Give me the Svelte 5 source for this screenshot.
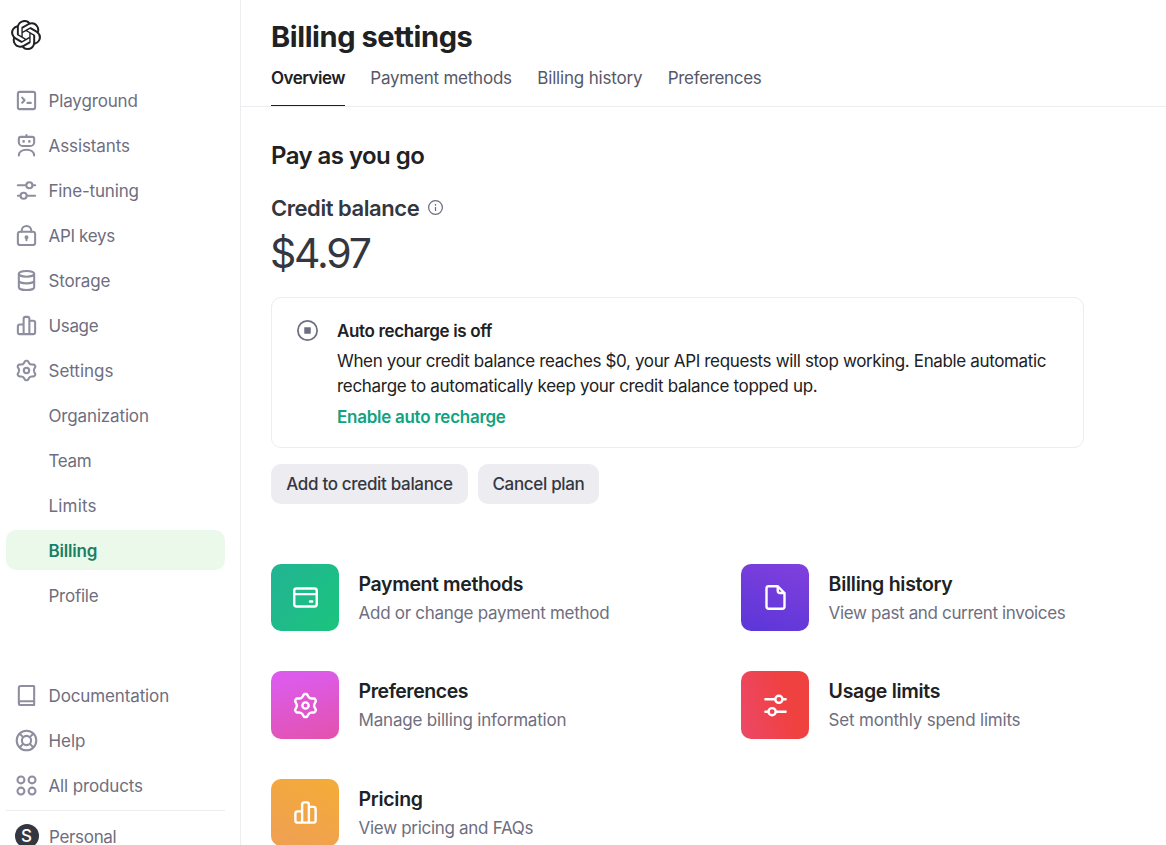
<script>
  const mainNav = [
    { label: 'Playground', icon: 'terminal', ls: -0.15 },
    { label: 'Assistants', icon: 'robot', ls: -0.1 },
    { label: 'Fine-tuning', icon: 'sliders', ls: -0.17 },
    { label: 'API keys', icon: 'lock', ls: -0.33 },
    { label: 'Storage', icon: 'database', ls: -0.15 },
    { label: 'Usage', icon: 'bars', ls: -0.35 },
    { label: 'Settings', icon: 'gear', ls: -0.03 },
    { label: 'Organization', ls: -0.15 },
    { label: 'Team', ls: -0.3 },
    { label: 'Limits', ls: 0.18 },
    { label: 'Billing', active: true, ls: -0.2 },
    { label: 'Profile', ls: -0.25 }
  ];
  const footNav = [
    { label: 'Documentation', icon: 'book', ls: -0.12 },
    { label: 'Help', icon: 'help', ls: -0.05 },
    { label: 'All products', icon: 'grid', ls: -0.13 }
  ];
  const tabs = [
    { label: 'Overview', active: true, ls: -0.55 },
    { label: 'Payment methods', ls: -0.22 },
    { label: 'Billing history', ls: -0.18 },
    { label: 'Preferences', ls: -0.33 }
  ];
  const cards = [
    { title: 'Payment methods', text: 'Add or change payment method', icon: 'card', tone: 'green', ls: -0.38, ts: -0.29 },
    { title: 'Billing history', text: 'View past and current invoices', icon: 'file', tone: 'purple', ls: -0.28, ts: -0.35 },
    { title: 'Preferences', text: 'Manage billing information', icon: 'gear', tone: 'pink', ls: -0.46, ts: -0.2 },
    { title: 'Usage limits', text: 'Set monthly spend limits', icon: 'sliders', tone: 'red', ls: -0.3, ts: -0.2 },
    { title: 'Pricing', text: 'View pricing and FAQs', icon: 'bars', tone: 'orange', ls: -0.3, ts: -0.3 }
  ];
</script>

{#snippet glyph(name)}
  <svg class="icon" viewBox="0 0 24 24" fill="none" stroke="currentColor" stroke-width="2.150" stroke-linecap="round" stroke-linejoin="round">
    {#if name === 'terminal'}
      <rect x="3" y="3" width="18" height="18" rx="2" /><path d="M7.500 9l2.500 2.700-2.500 2.700M13 14.500h3.500" />
    {:else if name === 'robot'}
      <path d="M12 1v2M6 3h12a2 2 0 0 1 2 2v3.500a4 4 0 0 1-4 4H8a4 4 0 0 1-4-4V5a2 2 0 0 1 2-2zM4 22.500c0-3.500 3.200-6 8-6s8 2.500 8 6" /><path d="M9 7.700v.1M15 7.700v.1" stroke-width="2.800" />
    {:else if name === 'sliders'}
      <circle cx="15" cy="6.500" r="3.200" /><circle cx="9" cy="17.500" r="3.200" /><path d="M3 6.500h8.500M18.500 6.500H21M3 17.500h2.500M12.500 17.500H21" />
    {:else if name === 'lock'}
      <rect x="3" y="8" width="18" height="14" rx="2.500" /><path d="M7 8V7a5 5 0 0 1 10 0v1M12 14.500v2.500" /><circle cx="12" cy="13.700" r="1" fill="currentColor" />
    {:else if name === 'database'}
      <ellipse cx="12" cy="5" rx="8" ry="3" /><path d="M4 5v14c0 1.700 3.600 3 8 3s8-1.300 8-3V5M4 12c0 1.700 3.600 3 8 3s8-1.300 8-3" />
    {:else if name === 'bars'}
      <path d="M9 21V5a2 2 0 0 1 2-2h2a2 2 0 0 1 2 2v16M9 11H5a2 2 0 0 0-2 2v6a2 2 0 0 0 2 2h14a2 2 0 0 0 2-2V9a2 2 0 0 0-2-2h-4" />
    {:else if name === 'gear'}
      <circle cx="12" cy="12" r="2.800" />
      <path transform="translate(-2.400 -2.400) scale(1.200)" stroke-width="1.800" d="M11.568 3.500a1 1 0 0 0-.863.494l-.811 1.381A3 3 0 0 1 7.330 6.856l-1.596.013a1 1 0 0 0-.858.501l-.439.761a1 1 0 0 0-.005.992l.788 1.392a3 3 0 0 1 0 2.966l-.788 1.392a1 1 0 0 0 .005.992l.439.760a1 1 0 0 0 .858.502l1.596.013a3 3 0 0 1 2.563 1.480l.811 1.381a1 1 0 0 0 .863.494h.864a1 1 0 0 0 .863-.494l.811-1.381a3 3 0 0 1 2.563-1.480l1.596-.013a1 1 0 0 0 .858-.502l.439-.760a1 1 0 0 0 .005-.992l-.788-1.392a3 3 0 0 1 0-2.966l.788-1.392a1 1 0 0 0-.005-.992l-.439-.761a1 1 0 0 0-.858-.501l-1.596-.013a3 3 0 0 1-2.563-1.481l-.811-1.381a1 1 0 0 0-.863-.494z" />
    {:else if name === 'book'}
      <path d="M20 18V2.500a.5.5 0 0 0-.5-.5H6a2 2 0 0 0-2 2v16M20 18H6a2 2 0 0 0 0 4h14zM20 18v4" />
    {:else if name === 'help'}
      <circle cx="12" cy="12" r="10.200" /><circle cx="12" cy="12" r="4.800" /><path d="M5 5l3.500 3.500M19 5l-3.500 3.500M5 19l3.500-3.500M19 19l-3.500-3.500" />
    {:else if name === 'grid'}
      <circle cx="6.200" cy="6.200" r="3.600" /><circle cx="17.800" cy="6.200" r="3.600" /><circle cx="6.200" cy="17.800" r="3.600" /><circle cx="17.800" cy="17.800" r="3.600" />
    {:else if name === 'card'}
      <rect x="2" y="4" width="20" height="16" rx="2" /><path d="M2 9h20M16 15.500h2" />
    {:else if name === 'file'}
      <path d="M14 2H6a2 2 0 0 0-2 2v16a2 2 0 0 0 2 2h12a2 2 0 0 0 2-2V8zM14 2v4a2 2 0 0 0 2 2h4" />
    {/if}
  </svg>
{/snippet}

{#snippet navItem(item)}
  <a class="nav-item" class:active={item.active}>
    <span class="nav-icon">{#if item.icon}{@render glyph(item.icon)}{/if}</span>
    <span class="nav-label" style="letter-spacing: {item.ls}px">{item.label}</span>
  </a>
{/snippet}

<div class="app">
  <aside>
    <svg class="logo" viewBox="0 0 24 24" fill="currentColor"><path d="M22.2819 9.8211a5.9847 5.9847 0 0 0-.5157-4.9108 6.0462 6.0462 0 0 0-6.5098-2.9A6.0651 6.0651 0 0 0 4.9807 4.1818a5.9847 5.9847 0 0 0-3.9977 2.9 6.0462 6.0462 0 0 0 .7427 7.0966 5.98 5.98 0 0 0 .511 4.9107 6.051 6.051 0 0 0 6.5146 2.9001A5.9847 5.9847 0 0 0 13.2599 24a6.0557 6.0557 0 0 0 5.7718-4.2058 5.9894 5.9894 0 0 0 3.9977-2.9001 6.0557 6.0557 0 0 0-.7475-7.0729zm-9.022 12.6081a4.4755 4.4755 0 0 1-2.8764-1.0408l.1419-.0804 4.7783-2.7582a.7948.7948 0 0 0 .3927-.6813v-6.7369l2.02 1.1686a.071.071 0 0 1 .038.052v5.5826a4.504 4.504 0 0 1-4.4945 4.4944zm-9.6607-4.1254a4.4708 4.4708 0 0 1-.5346-3.0137l.142.0852 4.783 2.7582a.7712.7712 0 0 0 .7806 0l5.8428-3.3685v2.3324a.0804.0804 0 0 1-.0332.0615L9.74 19.9502a4.4992 4.4992 0 0 1-6.1408-1.6464zM2.3408 7.8956a4.485 4.485 0 0 1 2.3655-1.9728V11.6a.7664.7664 0 0 0 .3879.6765l5.8144 3.3543-2.0201 1.1685a.0757.0757 0 0 1-.071 0l-4.8303-2.7865A4.504 4.504 0 0 1 2.3408 7.872zm16.5963 3.8558L13.1038 8.364 15.1192 7.2a.0757.0757 0 0 1 .071 0l4.8303 2.7913a4.4944 4.4944 0 0 1-.6765 8.1042v-5.6772a.79.79 0 0 0-.407-.667zm2.0107-3.0231l-.142-.0852-4.7735-2.7818a.7759.7759 0 0 0-.7854 0L9.409 9.2297V6.8974a.0662.0662 0 0 1 .0284-.0615l4.8303-2.7866a4.4992 4.4992 0 0 1 6.6802 4.66zM8.3065 12.863l-2.02-1.1638a.0804.0804 0 0 1-.038-.0567V6.0742a4.4992 4.4992 0 0 1 7.3757-3.4537l-.142.0805L8.704 5.459a.7948.7948 0 0 0-.3927.6813zm1.0976-2.3654l2.602-1.4998 2.6069 1.4998v2.9994l-2.5974 1.4997-2.6067-1.4997Z" /></svg>
    <nav>
      {#each mainNav as item}{@render navItem(item)}{/each}
    </nav>
    <nav class="foot">
      {#each footNav as item}{@render navItem(item)}{/each}
    </nav>
    <div class="account"><span class="avatar">S</span><span class="account-name">Personal</span></div>
  </aside>

  <main>
    <header>
      <h1>Billing settings</h1>
      <div class="tabs">
        {#each tabs as tab}
          <a class:active={tab.active} style="letter-spacing: {tab.ls}px">{tab.label}</a>
        {/each}
      </div>
    </header>

    <section>
      <h2>Pay as you go</h2>
      <h3>
        <span>Credit balance</span>
        <svg class="info" viewBox="0 0 24 24" fill="none" stroke="currentColor" stroke-width="2"><circle cx="12" cy="12" r="11" /><path d="M12 11v6.500M12 6.500v2.500" /></svg>
      </h3>
      <div class="amount">$4.97</div>

      <div class="notice">
        <svg class="stop" viewBox="0 0 24 24"><circle cx="12" cy="12" r="11" fill="none" stroke="currentColor" stroke-width="2" /><rect x="8.300" y="8.300" width="7.400" height="7.400" fill="currentColor" /></svg>
        <div>
          <div class="notice-title">Auto recharge is off</div>
          <p><span class="line-a">When your credit balance reaches $0, your API requests will stop working. Enable automatic</span><br /><span class="line-b">recharge to automatically keep your credit balance topped up.</span></p>
          <a class="enable">Enable auto recharge</a>
        </div>
      </div>

      <div class="actions">
        <button class="add">Add to credit balance</button>
        <button class="cancel">Cancel plan</button>
      </div>

      <div class="cards">
        {#each cards as card}
          <a class="card">
            <span class="tile {card.tone}">{@render glyph(card.icon)}</span>
            <span class="card-body">
              <span class="card-title" style="letter-spacing: {card.ls}px">{card.title}</span>
              <span class="card-text" style="letter-spacing: {card.ts}px">{card.text}</span>
            </span>
          </a>
        {/each}
      </div>
    </section>
  </main>
</div>

<style>
  :global(body) { margin: 0; background: #fff; overflow: hidden; }
  * { box-sizing: border-box; }
  .app { display: flex; width: 100%; height: 845px; overflow: hidden; font-family: Inter, 'Liberation Sans', sans-serif; font-size: 17px; color: #202123; white-space: nowrap; }
  aside { flex: none; width: 241px; padding: 20px 15px 0 6px; border-right: 1px solid #ececf1; color: #6e6e80; display: flex; flex-direction: column; }
  .logo { flex: none; display: block; width: 30px; height: 30px; margin: 0 0 30px 5px; color: #202123; }
  nav { display: flex; flex-direction: column; gap: 5px; }
  .nav-item { display: flex; align-items: center; height: 40px; padding: 1px 0 0 9px; border-radius: 10px; }
  .nav-item.active { background: #ebf9eb; color: #1a7f64; font-weight: 600; }
  .nav-icon { width: 33.500px; display: flex; color: #8e8ea0; }
  .nav-label { padding-top: 1px; }
  .icon { display: block; width: 23px; height: 23px; overflow: visible; }
  .foot { flex: none; height: 136px; margin-top: 60px; border-bottom: 1px solid #ececf1; }
  .account { flex: none; display: flex; align-items: center; gap: 10.500px; height: 40px; margin-top: 5px; padding-left: 8.500px; }
  .avatar { width: 24px; height: 24px; border-radius: 50%; background: #353740; color: #fff; display: flex; align-items: center; justify-content: center; font-size: 17px; font-weight: 500; }
  .account-name { padding-top: 1px; letter-spacing: -0.320px; }
  main { flex: 1; min-width: 0; }
  header { height: 107px; padding: 18px 30px 0; border-bottom: 1px solid #ececf1; }
  h1, h2, h3, p { margin: 0; }
  h1 { font-size: 29px; line-height: 38px; font-weight: 700; letter-spacing: -0.420px; }
  .tabs { display: flex; gap: 25.400px; height: 50px; }
  .tabs a { height: 50px; line-height: 45px; color: #565869; }
  .tabs a.active { color: #202123; font-weight: 600; border-bottom: 1px solid #202123; }
  section { width: 843px; padding: 33px 0 0 30px; }
  h2 { font-size: 24px; line-height: 32px; font-weight: 600; letter-spacing: -0.560px; }
  h3 { display: flex; align-items: center; gap: 9px; margin-top: 21px; font-size: 22px; line-height: 30px; font-weight: 600; letter-spacing: -0.450px; color: #353740; }
  .info { width: 15px; height: 15px; color: #6e6e80; margin-top: -2px; }
  .amount { height: 60px; line-height: 60px; font-size: 41px; margin-left: -1px; letter-spacing: -2.200px; color: #353740; }
  .notice { display: flex; gap: 19px; width: 813px; height: 151px; margin-top: 14px; padding: 21px 25px; border: 1px solid #ececf1; border-radius: 10px; }
  .stop { flex: none; width: 21px; height: 21px; margin-top: 1px; color: #6e6e80; }
  .notice-title { line-height: 24px; font-weight: 600; letter-spacing: -0.350px; }
  p { margin-top: 6px; line-height: 25px; }
  .line-a { letter-spacing: -0.355px; }
  .line-b { letter-spacing: -0.300px; }
  .enable { display: block; margin-top: 6px; line-height: 25px; color: #10a37f; font-weight: 600; letter-spacing: -0.270px; }
  .actions { display: flex; gap: 10px; margin-top: 16px; }
  button { height: 40px; padding: 0; border: 0; border-radius: 10px; background: #ececf1; color: #353740; font: 500 17px Inter, 'Liberation Sans', sans-serif; letter-spacing: -0.330px; }
  .add { width: 197px; }
  .cancel { width: 121px; }
  .cards { display: grid; grid-template-columns: 470px 343px; row-gap: 40px; margin-top: 59.600px; }
  .card { display: flex; align-items: center; gap: 19.600px; height: 67.500px; }
  .tile { display: flex; align-items: center; justify-content: center; width: 68px; height: 67.500px; padding-top: 0.500px; border-radius: 10px; color: #fff; }
  .tile .icon { width: 27px; height: 27px; }
  .green { background: linear-gradient(125deg, #22b394, #1bc47d); }
  .purple { background: linear-gradient(200deg, #8140dd, #5b36d8); }
  .pink { background: linear-gradient(165deg, #dc5bea 15%, #e352ac); }
  .red { background: linear-gradient(75deg, #ec4868, #f04141 65%); }
  .orange { background: linear-gradient(205deg, #f4ac36, #ef9f55); }
  .card-body { display: flex; flex-direction: column; padding-top: 1.700px; }
  .card-title { font-size: 19.500px; line-height: 30px; font-weight: 600; }
  .card-text { font-size: 17px; line-height: 28.500px; color: #6e6e80; }
</style>
